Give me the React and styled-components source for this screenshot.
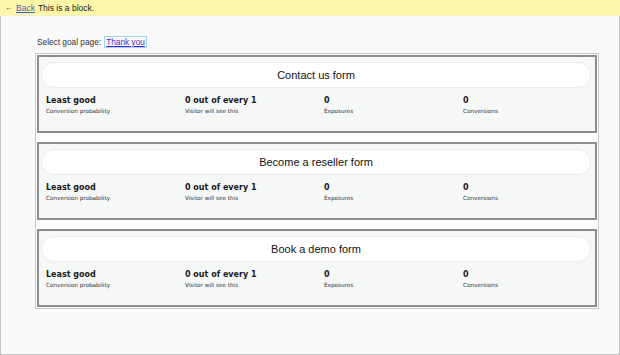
import React from 'react';
import styled, { createGlobalStyle } from 'styled-components';

const GlobalStyle = createGlobalStyle`
  html, body {
    margin: 0;
    padding: 0;
    background: #ffffff;
  }
  * { box-sizing: border-box; }
`;

const forms = [
  { name: 'Contact us form' },
  { name: 'Become a reseller form' },
  { name: 'Book a demo form' },
];

const Frame = styled.div`
  width: 620px;
  height: 355px;
  background: #fafafa;
  border-left: 1px solid #c4c4c4;
  border-right: 1px solid #c4c4c4;
  border-bottom: 1px solid #c4c4c4;
  font-family: "Liberation Sans", Arial, sans-serif;
  display: flex;
  flex-direction: column;
`;

const TopBar = styled.div`
  height: 16px;
  margin: 0 -1px;
  background: #fdf6a8;
  border-bottom: 1px solid #f3efc8;
  display: flex;
  align-items: center;
  padding-left: 5px;
  font-size: 8.5px;
  color: #222;
  gap: 3px;

  & a {
    color: #3d63b8;
    text-decoration: underline;
  }
`;

const Arrow = styled.span`
  font-size: 8px;
  color: #333;
`;

const Content = styled.div`
  padding: 20px 0 0 34px;
`;

const SelectRow = styled.div`
  font-size: 8.3px;
  color: #333;
  display: flex;
  align-items: center;
  height: 12px;
  padding-left: 2px;
  margin-bottom: 5px;

  & a {
    color: #4a1fcf;
    text-decoration: underline;
    margin-left: 3px;
    padding: 0 1px;
    border: 1px solid #9fd4f0;
    line-height: 10px;
  }
`;

const List = styled.div`
  width: 564px;
  border: 1px solid #c8c8c8;
  background: #fdfdfd;
  padding: 1px;
  display: flex;
  flex-direction: column;
  gap: 9px;
`;

const Card = styled.div`
  height: 78px;
  background: #f6f7f7;
  border: 2px solid #8c8c8c;
  padding: 5px 4px 0 2px;
`;

const Pill = styled.div`
  height: 26px;
  background: #ffffff;
  border: 1px solid #ececec;
  border-radius: 13px;
  display: flex;
  align-items: center;
  justify-content: center;
  font-size: 11px;
  color: #111;
`;

const Stats = styled.div`
  display: grid;
  grid-template-columns: repeat(4, 139px);
  padding: 8px 0 0 5px;
`;

const Stat = styled.div`
  display: flex;
  flex-direction: column;
`;

const Value = styled.div`
  font-family: "DejaVu Sans", Verdana, sans-serif;
  font-weight: bold;
  font-size: 8px;
  line-height: 10px;
  color: #1a1a1a;
`;

const Label = styled.div`
  font-family: "DejaVu Sans", Verdana, sans-serif;
  font-size: 5.7px;
  line-height: 8px;
  margin-top: 1px;
  color: #333;
`;

const FormCard = ({ form }) => (
  <Card>
    <Pill>{form.name}</Pill>
    <Stats>
      <Stat>
        <Value>Least good</Value>
        <Label>Conversion probability</Label>
      </Stat>
      <Stat>
        <Value>0 out of every 1</Value>
        <Label>Visitor will see this</Label>
      </Stat>
      <Stat>
        <Value>0</Value>
        <Label>Exposures</Label>
      </Stat>
      <Stat>
        <Value>0</Value>
        <Label>Conversions</Label>
      </Stat>
    </Stats>
  </Card>
);

const App = () => (
  <>
    <GlobalStyle />
    <Frame>
      <TopBar>
        <Arrow>&#8592;</Arrow>
        <a href="#">Back</a>
        <span>This is a block.</span>
      </TopBar>
      <Content>
        <SelectRow>
          Select goal page: <a href="#">Thank you</a>
        </SelectRow>
        <List>
          {forms.map((f) => (
            <FormCard key={f.name} form={f} />
          ))}
        </List>
      </Content>
    </Frame>
  </>
);

export default App;
